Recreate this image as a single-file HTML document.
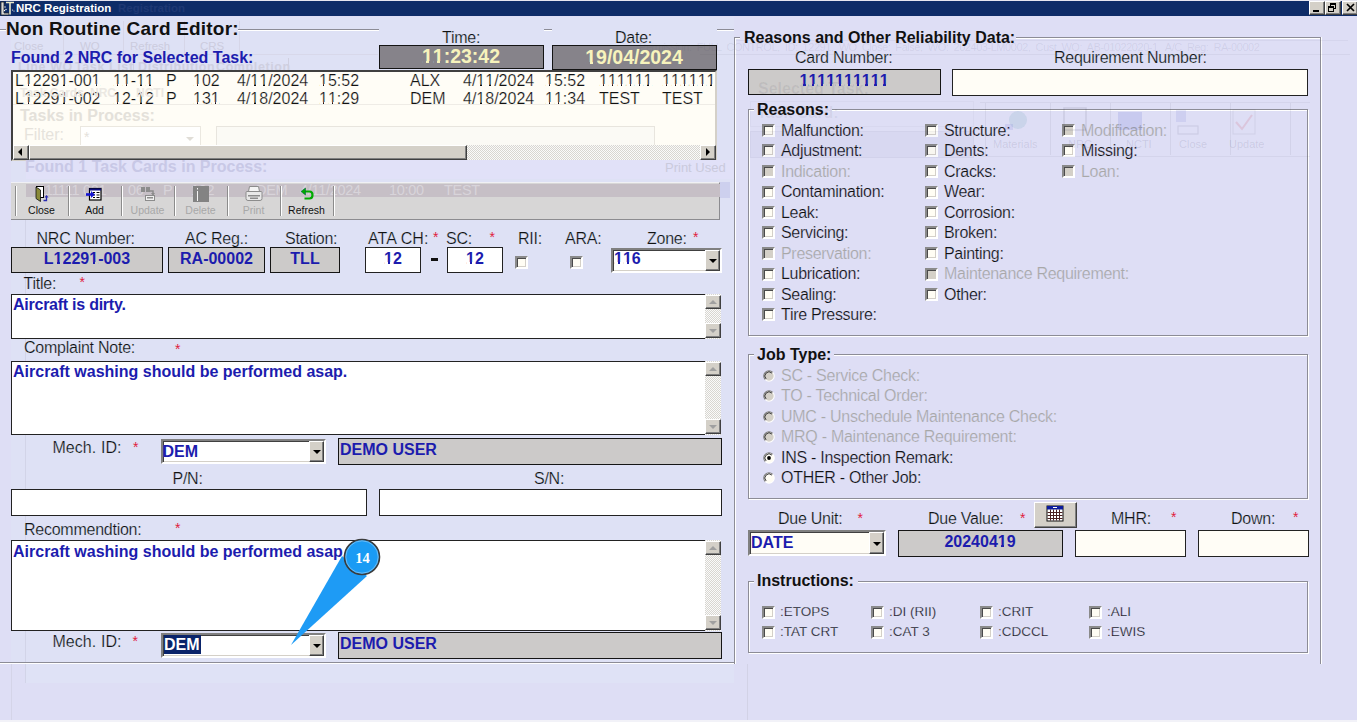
<!DOCTYPE html>
<html><head><meta charset="utf-8"><style>
html,body{margin:0;padding:0;width:1357px;height:722px;overflow:hidden;background:#dedef5}
body{position:relative;font-family:"Liberation Sans", sans-serif}
body>div{position:absolute;box-sizing:content-box}
.t{white-space:nowrap}
.o,.r{position:relative}
.o::before,.o::after,.r::before,.r::after{content:'';position:absolute;background:var(--b);bottom:0.185em;height:0.135em}
.o::before{left:0.04em;width:0.19em}
.o::after{left:0.378em;width:0.18em}
.r::before{left:0.05em;width:0.198em}
.r::after{left:0.343em;width:0.2em;height:0.11em}

</style></head><body>
<div style="left:0px;top:0px;width:1357px;height:722px;background:#dedef5"></div>
<div style="left:11px;top:17px;width:723px;height:646px;background:#dee1f5"></div>
<div style="left:25px;top:200px;width:1px;height:483px;background:#d2d4e8"></div>
<div style="left:0px;top:0px;width:1357px;height:1px;background:#e6e6f0"></div>
<div style="left:0px;top:1px;width:1357px;height:15px;background:#0e2c68"></div>
<div class="t" style="left:16px;top:1.02px;font-size:11.5px;line-height:14px;font-weight:bold;color:#fff;">NRC Registration</div>
<svg style="position:absolute;left:0;top:0" width="16" height="17"><rect x="0" y="1" width="15" height="15" fill="#0e2c68"/><path d="M1,2 h3 v11 h5 v2 h-8z" fill="#d8d8d8" stroke="#222" stroke-width="0.8"/><path d="M6,2.5 h8 M10,2.5 v12" stroke="#e8e8c8" stroke-width="1.6"/><circle cx="5" cy="7" r="0.7" fill="#fff"/><circle cx="6" cy="9.5" r="0.7" fill="#fff"/><circle cx="4.5" cy="10.5" r="0.7" fill="#fff"/><circle cx="12.5" cy="10" r="0.6" fill="#fff"/><circle cx="14" cy="11" r="0.6" fill="#fff"/></svg>
<div style="left:1309px;top:1px;width:14px;height:12px;background:#d4d0c8;border:1px solid;border-color:#fff #404040 #404040 #fff;box-shadow:inset -1px -1px 0 #808080"></div>
<div style="left:1325px;top:1px;width:14px;height:12px;background:#d4d0c8;border:1px solid;border-color:#fff #404040 #404040 #fff;box-shadow:inset -1px -1px 0 #808080"></div>
<div style="left:1342px;top:1px;width:14px;height:12px;background:#d4d0c8;border:1px solid;border-color:#fff #404040 #404040 #fff;box-shadow:inset -1px -1px 0 #808080"></div>
<svg style="position:absolute;left:0;top:0" width="1357" height="16"><rect x="1313" y="10" width="6" height="2" fill="#000"/><rect x="1330.5" y="3.5" width="5" height="5" fill="none" stroke="#000"/><rect x="1330" y="3" width="6" height="2" fill="#000"/><rect x="1328.5" y="6.5" width="5" height="5" fill="#d4d0c8" stroke="#000"/><rect x="1328" y="6" width="6" height="2" fill="#000"/><path d="M1347,4 l7,7 M1354,4 l-7,7" stroke="#000" stroke-width="1.7"/></svg>
<div class="t" style="left:118px;top:1.02px;font-size:11.5px;line-height:14px;font-weight:bold;color:#1e3874;">Registration</div>
<div style="left:63px;top:21px;width:1px;height:34px;background:#d6d6e8"></div>
<div style="left:123px;top:21px;width:1px;height:34px;background:#d6d6e8"></div>
<div style="left:184px;top:21px;width:1px;height:34px;background:#d6d6e8"></div>
<div style="left:239px;top:21px;width:1px;height:34px;background:#d6d6e8"></div>
<div class="t" style="left:14px;top:39.02px;font-size:11.5px;line-height:14px;font-weight:normal;color:#ccccde;">Close</div>
<div class="t" style="left:80px;top:39.02px;font-size:11.5px;line-height:14px;font-weight:normal;color:#ccccde;">WO</div>
<div class="t" style="left:130px;top:39.02px;font-size:11.5px;line-height:14px;font-weight:normal;color:#ccccde;">Refresh</div>
<div class="t" style="left:200px;top:39.02px;font-size:11.5px;line-height:14px;font-weight:normal;color:#ccccde;">CRS</div>
<div style="left:12px;top:54px;width:366px;height:1px;background:#d8d8ea"></div>
<div class="t" style="left:18px;top:59.67px;font-size:12.5px;line-height:15px;font-weight:bold;color:#cfcfe0;letter-spacing:0.6px">Line WO</div>
<div class="t" style="left:75px;top:59.67px;font-size:12.5px;line-height:15px;font-weight:bold;color:#cfcfe0;letter-spacing:0.6px">Task List</div>
<div class="t" style="left:138px;top:59.67px;font-size:12.5px;line-height:15px;font-weight:bold;color:#cfcfe0;letter-spacing:0.6px">Distribution</div>
<div class="t" style="left:216px;top:59.67px;font-size:12.5px;line-height:15px;font-weight:bold;color:#cfcfe0;letter-spacing:0.6px">Completion</div>
<div style="left:70px;top:58px;width:1px;height:16px;background:#cfcfe0"></div>
<div style="left:133px;top:58px;width:1px;height:16px;background:#cfcfe0"></div>
<div style="left:288px;top:58px;width:1px;height:16px;background:#cfcfe0"></div>
<div style="left:0px;top:29px;width:6px;height:1px;background:#8c8c96"></div>
<div style="left:0px;top:30px;width:6px;height:1px;background:#fff"></div>
<div style="left:238px;top:29px;width:141px;height:1px;background:#8c8c96"></div>
<div style="left:238px;top:30px;width:141px;height:1px;background:#fff"></div>
<div style="left:544px;top:29px;width:8px;height:1px;background:#8c8c96"></div>
<div style="left:544px;top:30px;width:8px;height:1px;background:#fff"></div>
<div style="left:717px;top:29px;width:17px;height:1px;background:#8c8c96"></div>
<div style="left:717px;top:30px;width:17px;height:1px;background:#fff"></div>
<div style="left:0px;top:662px;width:734px;height:1px;background:#8c8c96"></div>
<div style="left:0px;top:663px;width:734px;height:1px;background:#fff"></div>
<div class="t" style="left:6px;top:17.12px;font-size:19px;line-height:23px;font-weight:bold;color:#111;letter-spacing:0.2px">Non Routine Card Editor:</div>
<div class="t" style="left:442px;top:27.96px;font-size:16px;line-height:19px;font-weight:normal;color:#111;letter-spacing:-0.25px;-webkit-text-stroke:0.22px #dee0f5">Time:</div>
<div class="t" style="left:615px;top:27.96px;font-size:16px;line-height:19px;font-weight:normal;color:#111;letter-spacing:-0.25px;-webkit-text-stroke:0.22px #dee0f5">Date:</div>
<div style="left:379px;top:45px;width:163px;height:22px;background:#86838a;border:1px solid #141414"></div>
<div class="t" style="left:261.0px;top:44.74px;width:400px;text-align:center;font-size:19.5px;line-height:23px;font-weight:bold;color:#f7f3bc;"><span class="o" style="--b:#86838a">1</span><span class="o" style="--b:#86838a">1</span>:23:42</div>
<div style="left:552px;top:45px;width:163px;height:23px;background:#86838a;border:1px solid #141414"></div>
<div class="t" style="left:434.0px;top:45.74px;width:400px;text-align:center;font-size:19.5px;line-height:23px;font-weight:bold;color:#f7f3bc;"><span class="o" style="--b:#86838a">1</span>9/04/2024</div>
<div class="t" style="left:11px;top:47.96px;font-size:16px;line-height:19px;font-weight:bold;color:#1c1cae;">Found 2 NRC for Selected Task:</div>
<div style="left:11px;top:70px;width:702px;height:87px;background:#fffdf6;border:2px solid;border-color:#404040 #d4d0c8 #d4d0c8 #404040"></div>
<div class="t" style="left:15px;top:70.96px;font-size:16px;line-height:19px;font-weight:normal;color:#111;-webkit-text-stroke:0.22px #fffdf6">L<span class="r" style="--b:#fffdf6">1</span>229<span class="r" style="--b:#fffdf6">1</span>-00<span class="r" style="--b:#fffdf6">1</span></div>
<div class="t" style="left:113px;top:70.96px;font-size:16px;line-height:19px;font-weight:normal;color:#111;-webkit-text-stroke:0.22px #fffdf6"><span class="r" style="--b:#fffdf6">1</span><span class="r" style="--b:#fffdf6">1</span>-<span class="r" style="--b:#fffdf6">1</span><span class="r" style="--b:#fffdf6">1</span></div>
<div class="t" style="left:166px;top:70.96px;font-size:16px;line-height:19px;font-weight:normal;color:#111;-webkit-text-stroke:0.22px #fffdf6">P</div>
<div class="t" style="left:193px;top:70.96px;font-size:16px;line-height:19px;font-weight:normal;color:#111;-webkit-text-stroke:0.22px #fffdf6"><span class="r" style="--b:#fffdf6">1</span>02</div>
<div class="t" style="left:237px;top:70.96px;font-size:16px;line-height:19px;font-weight:normal;color:#111;-webkit-text-stroke:0.22px #fffdf6">4/<span class="r" style="--b:#fffdf6">1</span><span class="r" style="--b:#fffdf6">1</span>/2024</div>
<div class="t" style="left:319px;top:70.96px;font-size:16px;line-height:19px;font-weight:normal;color:#111;-webkit-text-stroke:0.22px #fffdf6"><span class="r" style="--b:#fffdf6">1</span>5:52</div>
<div class="t" style="left:410px;top:70.96px;font-size:16px;line-height:19px;font-weight:normal;color:#111;-webkit-text-stroke:0.22px #fffdf6">ALX</div>
<div class="t" style="left:463px;top:70.96px;font-size:16px;line-height:19px;font-weight:normal;color:#111;-webkit-text-stroke:0.22px #fffdf6">4/<span class="r" style="--b:#fffdf6">1</span><span class="r" style="--b:#fffdf6">1</span>/2024</div>
<div class="t" style="left:545px;top:70.96px;font-size:16px;line-height:19px;font-weight:normal;color:#111;-webkit-text-stroke:0.22px #fffdf6"><span class="r" style="--b:#fffdf6">1</span>5:52</div>
<div class="t" style="left:599px;top:70.96px;font-size:16px;line-height:19px;font-weight:normal;color:#111;-webkit-text-stroke:0.22px #fffdf6"><span class="r" style="--b:#fffdf6">1</span><span class="r" style="--b:#fffdf6">1</span><span class="r" style="--b:#fffdf6">1</span><span class="r" style="--b:#fffdf6">1</span><span class="r" style="--b:#fffdf6">1</span><span class="r" style="--b:#fffdf6">1</span></div>
<div class="t" style="left:662px;top:70.96px;font-size:16px;line-height:19px;font-weight:normal;color:#111;-webkit-text-stroke:0.22px #fffdf6"><span class="r" style="--b:#fffdf6">1</span><span class="r" style="--b:#fffdf6">1</span><span class="r" style="--b:#fffdf6">1</span><span class="r" style="--b:#fffdf6">1</span><span class="r" style="--b:#fffdf6">1</span><span class="r" style="--b:#fffdf6">1</span></div>
<div class="t" style="left:15px;top:88.96px;font-size:16px;line-height:19px;font-weight:normal;color:#111;-webkit-text-stroke:0.22px #fffdf6">L<span class="r" style="--b:#fffdf6">1</span>229<span class="r" style="--b:#fffdf6">1</span>-002</div>
<div class="t" style="left:113px;top:88.96px;font-size:16px;line-height:19px;font-weight:normal;color:#111;-webkit-text-stroke:0.22px #fffdf6"><span class="r" style="--b:#fffdf6">1</span>2-<span class="r" style="--b:#fffdf6">1</span>2</div>
<div class="t" style="left:166px;top:88.96px;font-size:16px;line-height:19px;font-weight:normal;color:#111;-webkit-text-stroke:0.22px #fffdf6">P</div>
<div class="t" style="left:193px;top:88.96px;font-size:16px;line-height:19px;font-weight:normal;color:#111;-webkit-text-stroke:0.22px #fffdf6"><span class="r" style="--b:#fffdf6">1</span>3<span class="r" style="--b:#fffdf6">1</span></div>
<div class="t" style="left:237px;top:88.96px;font-size:16px;line-height:19px;font-weight:normal;color:#111;-webkit-text-stroke:0.22px #fffdf6">4/<span class="r" style="--b:#fffdf6">1</span>8/2024</div>
<div class="t" style="left:319px;top:88.96px;font-size:16px;line-height:19px;font-weight:normal;color:#111;-webkit-text-stroke:0.22px #fffdf6"><span class="r" style="--b:#fffdf6">1</span><span class="r" style="--b:#fffdf6">1</span>:29</div>
<div class="t" style="left:410px;top:88.96px;font-size:16px;line-height:19px;font-weight:normal;color:#111;-webkit-text-stroke:0.22px #fffdf6">DEM</div>
<div class="t" style="left:463px;top:88.96px;font-size:16px;line-height:19px;font-weight:normal;color:#111;-webkit-text-stroke:0.22px #fffdf6">4/<span class="r" style="--b:#fffdf6">1</span>8/2024</div>
<div class="t" style="left:545px;top:88.96px;font-size:16px;line-height:19px;font-weight:normal;color:#111;-webkit-text-stroke:0.22px #fffdf6"><span class="r" style="--b:#fffdf6">1</span><span class="r" style="--b:#fffdf6">1</span>:34</div>
<div class="t" style="left:599px;top:88.96px;font-size:16px;line-height:19px;font-weight:normal;color:#111;-webkit-text-stroke:0.22px #fffdf6">TEST</div>
<div class="t" style="left:662px;top:88.96px;font-size:16px;line-height:19px;font-weight:normal;color:#111;-webkit-text-stroke:0.22px #fffdf6">TEST</div>
<div class="t" style="left:20px;top:85.84px;font-size:12px;line-height:14px;font-weight:bold;color:#ebe8e2;">Task Cards</div>
<div class="t" style="left:90px;top:85.84px;font-size:12px;line-height:14px;font-weight:bold;color:#ebe8e2;">NRC</div>
<div class="t" style="left:136px;top:85.84px;font-size:12px;line-height:14px;font-weight:bold;color:#ebe8e2;">NCTI</div>
<div style="left:13px;top:104px;width:702px;height:1px;background:#efece6"></div>
<div class="t" style="left:20px;top:105.96px;font-size:16px;line-height:19px;font-weight:bold;color:#e4e1da;">Tasks in Process:</div>
<div class="t" style="left:24px;top:124.96px;font-size:16px;line-height:19px;font-weight:normal;color:#e6e3dc;">Filter:</div>
<div style="left:80px;top:126px;width:119px;height:23px;border:1px solid #ebe8e0;background:#fffffe"></div>
<div class="t" style="left:84px;top:128.65px;font-size:14px;line-height:17px;font-weight:normal;color:#e4e1da;">*</div>
<div style="left:186px;top:137px;width:0;height:0;border-left:4px solid transparent;border-right:4px solid transparent;border-top:4px solid #e0ddd6"></div>
<div style="left:216px;top:126px;width:437px;height:25px;border:1px solid #e8e5de;background:#fbfaf5"></div>
<div style="left:13px;top:145px;width:702px;height:15px;background:repeating-conic-gradient(#fafafa 0 25%, #d8d6d0 0 50%) 0 0/2px 2px"></div>
<div style="left:13px;top:145px;width:14px;height:13px;background:#d4d0c8;border:1px solid;border-color:#fff #404040 #404040 #fff;box-shadow:inset -1px -1px 0 #808080"></div>
<div style="left:18px;top:148px;width:0;height:0;border-top:4px solid transparent;border-bottom:4px solid transparent;border-right:4px solid #000"></div>
<div style="left:29px;top:145px;width:436px;height:13px;background:#d4d0c8;border:1px solid;border-color:#fff #404040 #404040 #fff;box-shadow:inset -1px -1px 0 #808080"></div>
<div style="left:700px;top:145px;width:14px;height:13px;background:#d4d0c8;border:1px solid;border-color:#fff #404040 #404040 #fff;box-shadow:inset -1px -1px 0 #808080"></div>
<div style="left:706px;top:148px;width:0;height:0;border-top:4px solid transparent;border-bottom:4px solid transparent;border-left:4px solid #000"></div>
<div style="left:26px;top:160px;width:709px;height:19px;background:#e1e1f8"></div>
<div class="t" style="left:25px;top:156.96px;font-size:16px;line-height:19px;font-weight:bold;color:#c8c8e6;">Found 1 Task Cards in Process:</div>
<div class="t" style="left:665px;top:159.50px;font-size:13px;line-height:16px;font-weight:normal;color:#cacadc;">Print Used</div>
<div style="left:11px;top:182px;width:708px;height:36px;background:#d7d6d6;border-top:1px solid #f0f0f4;border-right:1px solid #8c8c90;border-bottom:1px solid #8c8c90"></div>
<div style="left:26px;top:184px;width:694px;height:13px;background:#c6bfc6"></div>
<div style="left:720px;top:182px;width:10px;height:16px;background:#cdd0ee"></div>
<div class="t" style="left:38px;top:182.48px;font-size:14.5px;line-height:17px;font-weight:normal;color:#d8d4da;letter-spacing:-0.3px">111111 001</div>
<div class="t" style="left:128px;top:182.48px;font-size:14.5px;line-height:17px;font-weight:normal;color:#d8d4da;letter-spacing:-0.3px">06</div>
<div class="t" style="left:163px;top:182.48px;font-size:14.5px;line-height:17px;font-weight:normal;color:#d8d4da;letter-spacing:-0.3px">P</div>
<div class="t" style="left:191px;top:182.48px;font-size:14.5px;line-height:17px;font-weight:normal;color:#d8d4da;letter-spacing:-0.3px">102</div>
<div class="t" style="left:256px;top:182.48px;font-size:14.5px;line-height:17px;font-weight:normal;color:#d8d4da;letter-spacing:-0.3px">DEM</div>
<div class="t" style="left:300px;top:182.48px;font-size:14.5px;line-height:17px;font-weight:normal;color:#d8d4da;letter-spacing:-0.3px">4/11/2024</div>
<div class="t" style="left:389px;top:182.48px;font-size:14.5px;line-height:17px;font-weight:normal;color:#d8d4da;letter-spacing:-0.3px">10:00</div>
<div class="t" style="left:444px;top:182.48px;font-size:14.5px;line-height:17px;font-weight:normal;color:#d8d4da;letter-spacing:-0.3px">TEST</div>
<div style="left:15px;top:186px;width:1px;height:30px;background:#8c8c8c"></div>
<div style="left:16px;top:186px;width:1px;height:30px;background:#fff"></div>
<div style="left:68px;top:186px;width:1px;height:30px;background:#8c8c8c"></div>
<div style="left:69px;top:186px;width:1px;height:30px;background:#fff"></div>
<div style="left:121px;top:186px;width:1px;height:30px;background:#8c8c8c"></div>
<div style="left:122px;top:186px;width:1px;height:30px;background:#fff"></div>
<div style="left:174px;top:186px;width:1px;height:30px;background:#8c8c8c"></div>
<div style="left:175px;top:186px;width:1px;height:30px;background:#fff"></div>
<div style="left:227px;top:186px;width:1px;height:30px;background:#8c8c8c"></div>
<div style="left:228px;top:186px;width:1px;height:30px;background:#fff"></div>
<div style="left:280px;top:186px;width:1px;height:30px;background:#8c8c8c"></div>
<div style="left:281px;top:186px;width:1px;height:30px;background:#fff"></div>
<div style="left:333px;top:186px;width:1px;height:30px;background:#8c8c8c"></div>
<div style="left:334px;top:186px;width:1px;height:30px;background:#fff"></div>
<div class="t" style="left:15.5px;top:204.36px;width:52px;text-align:center;font-size:10.5px;line-height:13px;font-weight:normal;color:#111;">Close</div>
<div class="t" style="left:68.5px;top:204.36px;width:52px;text-align:center;font-size:10.5px;line-height:13px;font-weight:normal;color:#111;">Add</div>
<div class="t" style="left:121.5px;top:204.36px;width:52px;text-align:center;font-size:10.5px;line-height:13px;font-weight:normal;color:#a8a8a8;">Update</div>
<div class="t" style="left:174.5px;top:204.36px;width:52px;text-align:center;font-size:10.5px;line-height:13px;font-weight:normal;color:#a8a8a8;">Delete</div>
<div class="t" style="left:227.5px;top:204.36px;width:52px;text-align:center;font-size:10.5px;line-height:13px;font-weight:normal;color:#a8a8a8;">Print</div>
<div class="t" style="left:280.5px;top:204.36px;width:52px;text-align:center;font-size:10.5px;line-height:13px;font-weight:normal;color:#111;">Refresh</div>
<svg style="position:absolute;left:0;top:0" width="340" height="222"><rect x="36.5" y="186.5" width="7" height="11" fill="#fff" stroke="#000"/><polygon points="36,187 40.5,190 40.5,201.5 36,198.5" fill="#8a8a3a" stroke="#111" stroke-width="0.8"/><path d="M43.5,200.5 h3 v-3.5" fill="none" stroke="#2a2ab0" stroke-width="1.3"/><polygon points="44.5,197.5 46.5,195 48.5,197.5" fill="#2a2ab0"/><rect x="89.5" y="188.5" width="11.5" height="11.5" fill="#fff" stroke="#000" stroke-width="1.2"/><rect x="89.5" y="188.5" width="11.5" height="2" fill="#101080"/><path d="M93,192.5 h2 M96.5,192.5 h3 M93,195 h2 M96.5,195 h3 M93,197.5 h2 M96.5,197.5 h3" stroke="#000" stroke-width="1"/><rect x="86" y="193.2" width="6" height="2.6" fill="#1515d0"/><polygon points="91,191 95,194.5 91,198" fill="#1515d0"/><rect x="141" y="187" width="4" height="5" fill="#8c8c8c"/><rect x="146" y="187" width="4" height="5" fill="#8c8c8c"/><path d="M150,191 h3 v3" stroke="#8c8c8c" stroke-width="1.5" fill="none"/><polygon points="151,193 155,193 153,196" fill="#8c8c8c"/><rect x="145.5" y="195.5" width="9" height="5" fill="#f0f0f0" stroke="#8c8c8c"/><rect x="147" y="197" width="6" height="1.5" fill="#8c8c8c"/><rect x="193" y="186" width="16" height="16" fill="#838383"/><rect x="197" y="191" width="1" height="10" fill="#f4f4f4"/><rect x="197" y="188" width="1" height="1.5" fill="#f4f4f4"/><path d="M249.5,186.5 h9 l1,5 h-11 z" fill="#f4f4f4" stroke="#8c8c8c"/><path d="M247,191.5 h14 q1,0 1,1 v6 q0,2 -2,2 h-12 q-2,0 -2,-2 v-6 q0,-1 1,-1z" fill="#e8e8e8" stroke="#8c8c8c"/><rect x="248" y="195" width="12" height="1.5" fill="#8c8c8c"/><rect x="250" y="197.5" width="8" height="1.5" fill="#8c8c8c"/><path d="M303.5,191.5 h6 q3,0 3,3.5 q0,3.5 -3,3.5 h-5" fill="none" stroke="#0a0" stroke-width="2.2"/><polygon points="301,191.5 305.5,188 305.5,195" fill="#0a0" stroke="#064" stroke-width="0.6"/></svg>
<div class="t" style="left:36.5px;top:229.46px;font-size:16px;line-height:19px;font-weight:normal;color:#111;letter-spacing:-0.2px;-webkit-text-stroke:0.22px #dee0f5">NRC Number:</div>
<div class="t" style="left:185px;top:228.96px;font-size:16px;line-height:19px;font-weight:normal;color:#111;letter-spacing:-0.25px;-webkit-text-stroke:0.22px #dee0f5">AC Reg.:</div>
<div class="t" style="left:285px;top:228.96px;font-size:16px;line-height:19px;font-weight:normal;color:#111;letter-spacing:-0.25px;-webkit-text-stroke:0.22px #dee0f5">Station:</div>
<div class="t" style="left:368px;top:228.96px;font-size:16px;line-height:19px;font-weight:normal;color:#111;letter-spacing:0.1px;-webkit-text-stroke:0.22px #dee0f5">ATA CH:</div>
<div class="t" style="left:446px;top:228.96px;font-size:16px;line-height:19px;font-weight:normal;color:#111;letter-spacing:-0.25px;-webkit-text-stroke:0.22px #dee0f5">SC:</div>
<div class="t" style="left:518px;top:228.96px;font-size:16px;line-height:19px;font-weight:normal;color:#111;letter-spacing:-0.25px;-webkit-text-stroke:0.22px #dee0f5">RII:</div>
<div class="t" style="left:565px;top:228.96px;font-size:16px;line-height:19px;font-weight:normal;color:#111;letter-spacing:-0.25px;-webkit-text-stroke:0.22px #dee0f5">ARA:</div>
<div class="t" style="left:647px;top:228.96px;font-size:16px;line-height:19px;font-weight:normal;color:#111;letter-spacing:-0.25px;-webkit-text-stroke:0.22px #dee0f5">Zone:</div>
<div class="t" style="left:433px;top:228.85px;font-size:14px;line-height:17px;font-weight:normal;color:#e0203c;">*</div>
<div class="t" style="left:489.5px;top:228.85px;font-size:14px;line-height:17px;font-weight:normal;color:#e0203c;">*</div>
<div class="t" style="left:693px;top:229.35px;font-size:14px;line-height:17px;font-weight:normal;color:#e0203c;">*</div>
<div style="left:11px;top:247px;width:150px;height:24px;background:#cccac9;border:1px solid #151515"></div>
<div class="t" style="left:-113.0px;top:248.96px;width:400px;text-align:center;font-size:16px;line-height:19px;font-weight:bold;color:#1c1cae;">L<span class="o" style="--b:#cccac9">1</span>229<span class="o" style="--b:#cccac9">1</span>-003</div>
<div style="left:168px;top:247px;width:95px;height:24px;background:#cccac9;border:1px solid #151515"></div>
<div class="t" style="left:16.5px;top:248.96px;width:400px;text-align:center;font-size:16px;line-height:19px;font-weight:bold;color:#1c1cae;">RA-00002</div>
<div style="left:270px;top:247px;width:68px;height:24px;background:#cccac9;border:1px solid #151515"></div>
<div class="t" style="left:105.0px;top:248.96px;width:400px;text-align:center;font-size:16px;line-height:19px;font-weight:bold;color:#1c1cae;">TLL</div>
<div style="left:365px;top:247px;width:54px;height:24px;background:#fff;border:1px solid #222"></div>
<div class="t" style="left:193.0px;top:248.96px;width:400px;text-align:center;font-size:16px;line-height:19px;font-weight:bold;color:#1c1cae;"><span class="o" style="--b:#fff">1</span>2</div>
<div style="left:431px;top:258px;width:7px;height:3px;background:#111"></div>
<div style="left:447px;top:247px;width:54px;height:24px;background:#fff;border:1px solid #222"></div>
<div class="t" style="left:275.0px;top:248.96px;width:400px;text-align:center;font-size:16px;line-height:19px;font-weight:bold;color:#1c1cae;"><span class="o" style="--b:#fff">1</span>2</div>
<div style="left:515px;top:256px;width:9px;height:9px;background:#fffdf4;border:2px solid;border-color:#8a8a8a #fff #fff #8a8a8a;box-shadow:inset 1px 1px 0 #4a4a4a, inset -1px -1px 0 #d4d0c8"></div>
<div style="left:570px;top:256px;width:9px;height:9px;background:#fffdf4;border:2px solid;border-color:#8a8a8a #fff #fff #8a8a8a;box-shadow:inset 1px 1px 0 #4a4a4a, inset -1px -1px 0 #d4d0c8"></div>
<div style="left:611px;top:248px;width:107px;height:21px;background:#fff;border:2px solid;border-color:#808080 #fff #fff #808080;box-shadow:inset 1px 1px 0 #404040, inset -1px -1px 0 #d4d0c8"></div>
<div style="left:705px;top:250px;width:13px;height:19px;background:#d4d0c8;border:1px solid;border-color:#fff #404040 #404040 #fff;box-shadow:inset -1px -1px 0 #808080"></div>
<div style="left:709px;top:259px;width:0;height:0;border-left:4px solid transparent;border-right:4px solid transparent;border-top:4px solid #000"></div>
<div class="t" style="left:614px;top:248.96px;font-size:16px;line-height:19px;font-weight:bold;color:#1c1cae;"><span class="o" style="--b:#fff">1</span><span class="o" style="--b:#fff">1</span>6</div>
<div class="t" style="left:23.5px;top:273.96px;font-size:16px;line-height:19px;font-weight:normal;color:#111;letter-spacing:-0.25px;-webkit-text-stroke:0.22px #dee0f5">Title:</div>
<div class="t" style="left:79.5px;top:273.85px;font-size:14px;line-height:17px;font-weight:normal;color:#e0203c;">*</div>
<div style="left:11px;top:294px;width:693px;height:43px;background:#fff;border:1px solid #222"></div>
<div style="left:705px;top:294px;width:16px;height:45px;background:repeating-conic-gradient(#fafafa 0 25%, #d8d6d0 0 50%) 0 0/2px 2px"></div>
<div style="left:705px;top:295px;width:14px;height:12px;background:#d4d0c8;border:1px solid;border-color:#fff #404040 #404040 #fff;box-shadow:inset -1px -1px 0 #808080"></div>
<div style="left:705px;top:323px;width:14px;height:13px;background:#d4d0c8;border:1px solid;border-color:#fff #404040 #404040 #fff;box-shadow:inset -1px -1px 0 #808080"></div>
<div style="left:709px;top:300px;width:0;height:0;border-left:4px solid transparent;border-right:4px solid transparent;border-bottom:4px solid #a0a0a0"></div>
<div style="left:709px;top:329px;width:0;height:0;border-left:4px solid transparent;border-right:4px solid transparent;border-top:4px solid #a0a0a0"></div>
<div class="t" style="left:13px;top:295.46px;font-size:16px;line-height:19px;font-weight:bold;color:#1c1cae;"><span style="letter-spacing:-0.25px">Aircraft is dirty.</span></div>
<div class="t" style="left:24px;top:338.46px;font-size:16px;line-height:19px;font-weight:normal;color:#111;letter-spacing:-0.25px;-webkit-text-stroke:0.22px #dee0f5">Complaint Note:</div>
<div class="t" style="left:175.0px;top:340.85px;font-size:14px;line-height:17px;font-weight:normal;color:#e0203c;">*</div>
<div style="left:11px;top:361px;width:693px;height:72px;background:#fff;border:1px solid #222"></div>
<div style="left:705px;top:361px;width:16px;height:74px;background:repeating-conic-gradient(#fafafa 0 25%, #d8d6d0 0 50%) 0 0/2px 2px"></div>
<div style="left:705px;top:362px;width:14px;height:12px;background:#d4d0c8;border:1px solid;border-color:#fff #404040 #404040 #fff;box-shadow:inset -1px -1px 0 #808080"></div>
<div style="left:705px;top:419px;width:14px;height:13px;background:#d4d0c8;border:1px solid;border-color:#fff #404040 #404040 #fff;box-shadow:inset -1px -1px 0 #808080"></div>
<div style="left:709px;top:367px;width:0;height:0;border-left:4px solid transparent;border-right:4px solid transparent;border-bottom:4px solid #a0a0a0"></div>
<div style="left:709px;top:425px;width:0;height:0;border-left:4px solid transparent;border-right:4px solid transparent;border-top:4px solid #a0a0a0"></div>
<div class="t" style="left:13px;top:361.96px;font-size:16px;line-height:19px;font-weight:bold;color:#1c1cae;">Aircraft washing should be performed asap.</div>
<div class="t" style="left:52.5px;top:438.26px;font-size:16px;line-height:19px;font-weight:normal;color:#111;letter-spacing:0px;word-spacing:0.5px;-webkit-text-stroke:0.22px #dee0f5">Mech. ID:</div>
<div class="t" style="left:133.0px;top:438.85px;font-size:14px;line-height:17px;font-weight:normal;color:#e0203c;">*</div>
<div style="left:161px;top:439px;width:161px;height:21px;background:#fff;border:2px solid;border-color:#808080 #fff #fff #808080;box-shadow:inset 1px 1px 0 #404040, inset -1px -1px 0 #d4d0c8"></div>
<div style="left:309px;top:441px;width:13px;height:19px;background:#d4d0c8;border:1px solid;border-color:#fff #404040 #404040 #fff;box-shadow:inset -1px -1px 0 #808080"></div>
<div style="left:313px;top:450px;width:0;height:0;border-left:4px solid transparent;border-right:4px solid transparent;border-top:4px solid #000"></div>
<div class="t" style="left:162.5px;top:441.96px;font-size:16px;line-height:19px;font-weight:bold;color:#1c1cae;">DEM</div>
<div style="left:338px;top:438px;width:382px;height:25px;background:#cccac9;border:1px solid #151515"></div>
<div class="t" style="left:340px;top:439.96px;font-size:16px;line-height:19px;font-weight:bold;color:#1c1cae;">DEMO USER</div>
<div class="t" style="left:172.5px;top:469.46px;font-size:16px;line-height:19px;font-weight:normal;color:#111;letter-spacing:-0.25px;-webkit-text-stroke:0.22px #dee0f5">P/N:</div>
<div class="t" style="left:534px;top:469.46px;font-size:16px;line-height:19px;font-weight:normal;color:#111;letter-spacing:-0.25px;-webkit-text-stroke:0.22px #dee0f5">S/N:</div>
<div style="left:11px;top:489px;width:354px;height:25px;background:#fff;border:1px solid #222"></div>
<div style="left:379px;top:489px;width:341px;height:25px;background:#fff;border:1px solid #222"></div>
<div class="t" style="left:24px;top:519.96px;font-size:16px;line-height:19px;font-weight:normal;color:#111;letter-spacing:-0.25px;-webkit-text-stroke:0.22px #dee0f5">Recommendtion:</div>
<div class="t" style="left:175.0px;top:520.35px;font-size:14px;line-height:17px;font-weight:normal;color:#e0203c;">*</div>
<div style="left:11px;top:540px;width:693px;height:89px;background:#fff;border:1px solid #222"></div>
<div style="left:705px;top:540px;width:16px;height:91px;background:repeating-conic-gradient(#fafafa 0 25%, #d8d6d0 0 50%) 0 0/2px 2px"></div>
<div style="left:705px;top:541px;width:14px;height:12px;background:#d4d0c8;border:1px solid;border-color:#fff #404040 #404040 #fff;box-shadow:inset -1px -1px 0 #808080"></div>
<div style="left:705px;top:615px;width:14px;height:13px;background:#d4d0c8;border:1px solid;border-color:#fff #404040 #404040 #fff;box-shadow:inset -1px -1px 0 #808080"></div>
<div style="left:709px;top:546px;width:0;height:0;border-left:4px solid transparent;border-right:4px solid transparent;border-bottom:4px solid #a0a0a0"></div>
<div style="left:709px;top:621px;width:0;height:0;border-left:4px solid transparent;border-right:4px solid transparent;border-top:4px solid #a0a0a0"></div>
<div class="t" style="left:13px;top:541.96px;font-size:16px;line-height:19px;font-weight:bold;color:#1c1cae;">Aircraft washing should be performed asap.</div>
<div class="t" style="left:52.5px;top:632.26px;font-size:16px;line-height:19px;font-weight:normal;color:#111;letter-spacing:0px;word-spacing:0.5px;-webkit-text-stroke:0.22px #dee0f5">Mech. ID:</div>
<div class="t" style="left:132.5px;top:632.85px;font-size:14px;line-height:17px;font-weight:normal;color:#e0203c;">*</div>
<div style="left:161px;top:633px;width:161px;height:21px;background:#fff;border:2px solid;border-color:#808080 #fff #fff #808080;box-shadow:inset 1px 1px 0 #404040, inset -1px -1px 0 #d4d0c8"></div>
<div style="left:309px;top:635px;width:13px;height:19px;background:#d4d0c8;border:1px solid;border-color:#fff #404040 #404040 #fff;box-shadow:inset -1px -1px 0 #808080"></div>
<div style="left:313px;top:644px;width:0;height:0;border-left:4px solid transparent;border-right:4px solid transparent;border-top:4px solid #000"></div>
<div style="left:164px;top:635px;width:37px;height:19px;background:#0a246a"></div>
<div class="t" style="left:164px;top:634.96px;font-size:16px;line-height:19px;font-weight:bold;color:#fff;">DEM</div>
<div style="left:338px;top:632px;width:382px;height:25px;background:#cccac9;border:1px solid #151515"></div>
<div class="t" style="left:340px;top:633.96px;font-size:16px;line-height:19px;font-weight:bold;color:#1c1cae;">DEMO USER</div>
<div style="left:734px;top:37px;width:585px;height:626px;border:1px solid #8c8c96;border-bottom:none;box-shadow:inset 1px 1px 0 #fff, 1px 0 0 #fff"></div>
<div style="left:747px;top:664px;width:1px;height:56px;background:#d2d2e6"></div>
<div style="left:26px;top:664px;width:708px;height:19px;background:#dfe2f6"></div>
<div style="left:11px;top:664px;width:1px;height:56px;background:#d4d4e8"></div>
<div style="left:0px;top:720px;width:1357px;height:2px;background:#f2f2f8"></div>
<div style="left:740px;top:30px;width:276px;height:14px;background:#dedef5"></div>
<div class="t" style="left:744px;top:27.96px;font-size:16px;line-height:19px;font-weight:bold;color:#111;">Reasons and Other Reliability Data:</div>
<div class="t" style="left:795px;top:47.96px;font-size:16px;line-height:19px;font-weight:normal;color:#111;letter-spacing:-0.25px;-webkit-text-stroke:0.22px #dee0f5">Card Number:</div>
<div class="t" style="left:1054px;top:47.96px;font-size:16px;line-height:19px;font-weight:normal;color:#111;letter-spacing:-0.25px;-webkit-text-stroke:0.22px #dee0f5">Requirement Number:</div>
<div style="left:748px;top:69px;width:191px;height:24px;background:#cccac9;border:1px solid #151515"></div>
<div class="t" style="left:644.0px;top:70.96px;width:400px;text-align:center;font-size:16px;line-height:19px;font-weight:bold;color:#1c1cae;"><span class="o" style="--b:#cccac9">1</span><span class="o" style="--b:#cccac9">1</span><span class="o" style="--b:#cccac9">1</span><span class="o" style="--b:#cccac9">1</span><span class="o" style="--b:#cccac9">1</span><span class="o" style="--b:#cccac9">1</span><span class="o" style="--b:#cccac9">1</span><span class="o" style="--b:#cccac9">1</span><span class="o" style="--b:#cccac9">1</span><span class="o" style="--b:#cccac9">1</span></div>
<div style="left:952px;top:69px;width:354px;height:25px;background:#fffdf6;border:1px solid #222"></div>
<div style="left:748px;top:109px;width:558px;height:225px;border:1px solid #8c8c96;box-shadow:inset 1px 1px 0 #fff, 1px 1px 0 #fff"></div>
<div style="left:754px;top:101px;width:78px;height:14px;background:#dedef5"></div>
<div class="t" style="left:757px;top:99.96px;font-size:16px;line-height:19px;font-weight:bold;color:#111;">Reasons:</div>
<div style="left:762px;top:124px;width:9px;height:9px;background:#fffdf4;border:2px solid;border-color:#8a8a8a #fff #fff #8a8a8a;box-shadow:inset 1px 1px 0 #4a4a4a, inset -1px -1px 0 #d4d0c8"></div>
<div class="t" style="left:781px;top:120.96px;font-size:16px;line-height:19px;font-weight:normal;color:#111;letter-spacing:-0.3px;-webkit-text-stroke:0.22px #dedef5">Malfunction:</div>
<div style="left:762px;top:144px;width:9px;height:9px;background:#fffdf4;border:2px solid;border-color:#8a8a8a #fff #fff #8a8a8a;box-shadow:inset 1px 1px 0 #4a4a4a, inset -1px -1px 0 #d4d0c8"></div>
<div class="t" style="left:781px;top:141.46px;font-size:16px;line-height:19px;font-weight:normal;color:#111;letter-spacing:-0.3px;-webkit-text-stroke:0.22px #dedef5">Adjustment:</div>
<div style="left:762px;top:165px;width:9px;height:9px;background:#d4d0c8;border:2px solid;border-color:#8a8a8a #fff #fff #8a8a8a;box-shadow:inset 1px 1px 0 #4a4a4a, inset -1px -1px 0 #d4d0c8"></div>
<div class="t" style="left:781px;top:161.96px;font-size:16px;line-height:19px;font-weight:normal;color:#a8a8a8;letter-spacing:-0.3px;-webkit-text-stroke:0.22px #dedef5">Indication:</div>
<div style="left:762px;top:186px;width:9px;height:9px;background:#fffdf4;border:2px solid;border-color:#8a8a8a #fff #fff #8a8a8a;box-shadow:inset 1px 1px 0 #4a4a4a, inset -1px -1px 0 #d4d0c8"></div>
<div class="t" style="left:781px;top:182.46px;font-size:16px;line-height:19px;font-weight:normal;color:#111;letter-spacing:-0.3px;-webkit-text-stroke:0.22px #dedef5">Contamination:</div>
<div style="left:762px;top:206px;width:9px;height:9px;background:#fffdf4;border:2px solid;border-color:#8a8a8a #fff #fff #8a8a8a;box-shadow:inset 1px 1px 0 #4a4a4a, inset -1px -1px 0 #d4d0c8"></div>
<div class="t" style="left:781px;top:202.96px;font-size:16px;line-height:19px;font-weight:normal;color:#111;letter-spacing:-0.3px;-webkit-text-stroke:0.22px #dedef5">Leak:</div>
<div style="left:762px;top:226px;width:9px;height:9px;background:#fffdf4;border:2px solid;border-color:#8a8a8a #fff #fff #8a8a8a;box-shadow:inset 1px 1px 0 #4a4a4a, inset -1px -1px 0 #d4d0c8"></div>
<div class="t" style="left:781px;top:223.46px;font-size:16px;line-height:19px;font-weight:normal;color:#111;letter-spacing:-0.3px;-webkit-text-stroke:0.22px #dedef5">Servicing:</div>
<div style="left:762px;top:247px;width:9px;height:9px;background:#d4d0c8;border:2px solid;border-color:#8a8a8a #fff #fff #8a8a8a;box-shadow:inset 1px 1px 0 #4a4a4a, inset -1px -1px 0 #d4d0c8"></div>
<div class="t" style="left:781px;top:243.96px;font-size:16px;line-height:19px;font-weight:normal;color:#a8a8a8;letter-spacing:-0.3px;-webkit-text-stroke:0.22px #dedef5">Preservation:</div>
<div style="left:762px;top:268px;width:9px;height:9px;background:#fffdf4;border:2px solid;border-color:#8a8a8a #fff #fff #8a8a8a;box-shadow:inset 1px 1px 0 #4a4a4a, inset -1px -1px 0 #d4d0c8"></div>
<div class="t" style="left:781px;top:264.46px;font-size:16px;line-height:19px;font-weight:normal;color:#111;letter-spacing:-0.3px;-webkit-text-stroke:0.22px #dedef5">Lubrication:</div>
<div style="left:762px;top:288px;width:9px;height:9px;background:#fffdf4;border:2px solid;border-color:#8a8a8a #fff #fff #8a8a8a;box-shadow:inset 1px 1px 0 #4a4a4a, inset -1px -1px 0 #d4d0c8"></div>
<div class="t" style="left:781px;top:284.96px;font-size:16px;line-height:19px;font-weight:normal;color:#111;letter-spacing:-0.3px;-webkit-text-stroke:0.22px #dedef5">Sealing:</div>
<div style="left:762px;top:308px;width:9px;height:9px;background:#fffdf4;border:2px solid;border-color:#8a8a8a #fff #fff #8a8a8a;box-shadow:inset 1px 1px 0 #4a4a4a, inset -1px -1px 0 #d4d0c8"></div>
<div class="t" style="left:781px;top:305.46px;font-size:16px;line-height:19px;font-weight:normal;color:#111;letter-spacing:-0.3px;-webkit-text-stroke:0.22px #dedef5">Tire Pressure:</div>
<div style="left:925px;top:124px;width:9px;height:9px;background:#fffdf4;border:2px solid;border-color:#8a8a8a #fff #fff #8a8a8a;box-shadow:inset 1px 1px 0 #4a4a4a, inset -1px -1px 0 #d4d0c8"></div>
<div class="t" style="left:944px;top:120.96px;font-size:16px;line-height:19px;font-weight:normal;color:#111;letter-spacing:-0.3px;-webkit-text-stroke:0.22px #dedef5">Structure:</div>
<div style="left:925px;top:144px;width:9px;height:9px;background:#fffdf4;border:2px solid;border-color:#8a8a8a #fff #fff #8a8a8a;box-shadow:inset 1px 1px 0 #4a4a4a, inset -1px -1px 0 #d4d0c8"></div>
<div class="t" style="left:944px;top:141.46px;font-size:16px;line-height:19px;font-weight:normal;color:#111;letter-spacing:-0.3px;-webkit-text-stroke:0.22px #dedef5">Dents:</div>
<div style="left:925px;top:165px;width:9px;height:9px;background:#fffdf4;border:2px solid;border-color:#8a8a8a #fff #fff #8a8a8a;box-shadow:inset 1px 1px 0 #4a4a4a, inset -1px -1px 0 #d4d0c8"></div>
<div class="t" style="left:944px;top:161.96px;font-size:16px;line-height:19px;font-weight:normal;color:#111;letter-spacing:-0.3px;-webkit-text-stroke:0.22px #dedef5">Cracks:</div>
<div style="left:925px;top:186px;width:9px;height:9px;background:#fffdf4;border:2px solid;border-color:#8a8a8a #fff #fff #8a8a8a;box-shadow:inset 1px 1px 0 #4a4a4a, inset -1px -1px 0 #d4d0c8"></div>
<div class="t" style="left:944px;top:182.46px;font-size:16px;line-height:19px;font-weight:normal;color:#111;letter-spacing:-0.3px;-webkit-text-stroke:0.22px #dedef5">Wear:</div>
<div style="left:925px;top:206px;width:9px;height:9px;background:#fffdf4;border:2px solid;border-color:#8a8a8a #fff #fff #8a8a8a;box-shadow:inset 1px 1px 0 #4a4a4a, inset -1px -1px 0 #d4d0c8"></div>
<div class="t" style="left:944px;top:202.96px;font-size:16px;line-height:19px;font-weight:normal;color:#111;letter-spacing:-0.3px;-webkit-text-stroke:0.22px #dedef5">Corrosion:</div>
<div style="left:925px;top:226px;width:9px;height:9px;background:#fffdf4;border:2px solid;border-color:#8a8a8a #fff #fff #8a8a8a;box-shadow:inset 1px 1px 0 #4a4a4a, inset -1px -1px 0 #d4d0c8"></div>
<div class="t" style="left:944px;top:223.46px;font-size:16px;line-height:19px;font-weight:normal;color:#111;letter-spacing:-0.3px;-webkit-text-stroke:0.22px #dedef5">Broken:</div>
<div style="left:925px;top:247px;width:9px;height:9px;background:#fffdf4;border:2px solid;border-color:#8a8a8a #fff #fff #8a8a8a;box-shadow:inset 1px 1px 0 #4a4a4a, inset -1px -1px 0 #d4d0c8"></div>
<div class="t" style="left:944px;top:243.96px;font-size:16px;line-height:19px;font-weight:normal;color:#111;letter-spacing:-0.3px;-webkit-text-stroke:0.22px #dedef5">Painting:</div>
<div style="left:925px;top:268px;width:9px;height:9px;background:#d4d0c8;border:2px solid;border-color:#8a8a8a #fff #fff #8a8a8a;box-shadow:inset 1px 1px 0 #4a4a4a, inset -1px -1px 0 #d4d0c8"></div>
<div class="t" style="left:944px;top:264.46px;font-size:16px;line-height:19px;font-weight:normal;color:#a8a8a8;letter-spacing:-0.3px;-webkit-text-stroke:0.22px #dedef5">Maintenance Requirement:</div>
<div style="left:925px;top:288px;width:9px;height:9px;background:#fffdf4;border:2px solid;border-color:#8a8a8a #fff #fff #8a8a8a;box-shadow:inset 1px 1px 0 #4a4a4a, inset -1px -1px 0 #d4d0c8"></div>
<div class="t" style="left:944px;top:284.96px;font-size:16px;line-height:19px;font-weight:normal;color:#111;letter-spacing:-0.3px;-webkit-text-stroke:0.22px #dedef5">Other:</div>
<div style="left:1062px;top:124px;width:9px;height:9px;background:#d4d0c8;border:2px solid;border-color:#8a8a8a #fff #fff #8a8a8a;box-shadow:inset 1px 1px 0 #4a4a4a, inset -1px -1px 0 #d4d0c8"></div>
<div class="t" style="left:1081px;top:120.96px;font-size:16px;line-height:19px;font-weight:normal;color:#a8a8a8;letter-spacing:-0.3px;-webkit-text-stroke:0.22px #dedef5">Modification:</div>
<div style="left:1062px;top:144px;width:9px;height:9px;background:#fffdf4;border:2px solid;border-color:#8a8a8a #fff #fff #8a8a8a;box-shadow:inset 1px 1px 0 #4a4a4a, inset -1px -1px 0 #d4d0c8"></div>
<div class="t" style="left:1081px;top:141.46px;font-size:16px;line-height:19px;font-weight:normal;color:#111;letter-spacing:-0.3px;-webkit-text-stroke:0.22px #dedef5">Missing:</div>
<div style="left:1062px;top:165px;width:9px;height:9px;background:#d4d0c8;border:2px solid;border-color:#8a8a8a #fff #fff #8a8a8a;box-shadow:inset 1px 1px 0 #4a4a4a, inset -1px -1px 0 #d4d0c8"></div>
<div class="t" style="left:1081px;top:161.96px;font-size:16px;line-height:19px;font-weight:normal;color:#a8a8a8;letter-spacing:-0.3px;-webkit-text-stroke:0.22px #dedef5">Loan:</div>
<div style="left:748px;top:354px;width:558px;height:143px;border:1px solid #8c8c96;box-shadow:inset 1px 1px 0 #fff, 1px 1px 0 #fff"></div>
<div style="left:754px;top:346px;width:80px;height:14px;background:#dedef5"></div>
<div class="t" style="left:757px;top:344.96px;font-size:16px;line-height:19px;font-weight:bold;color:#111;">Job Type:</div>
<svg style="position:absolute;left:763px;top:369.5px" width="12" height="12"><circle cx="6" cy="6" r="5.2" fill="#d4d0c8"/><path d="M2.3,9.7 A5.2,5.2 0 0 1 9.7,2.3" stroke="#7c7c7c" stroke-width="1.1" fill="none"/><path d="M3.1,8.9 A4.1,4.1 0 0 1 8.9,3.1" stroke="#3a3a3a" stroke-width="1" fill="none"/><path d="M9.7,2.3 A5.2,5.2 0 0 1 2.3,9.7" stroke="#fff" stroke-width="1.1" fill="none"/></svg>
<div class="t" style="left:781px;top:365.56px;font-size:16px;line-height:19px;font-weight:normal;color:#a8a8a8;letter-spacing:-0.27px;-webkit-text-stroke:0.22px #dedef5">SC - Service Check:</div>
<svg style="position:absolute;left:763px;top:389.5px" width="12" height="12"><circle cx="6" cy="6" r="5.2" fill="#d4d0c8"/><path d="M2.3,9.7 A5.2,5.2 0 0 1 9.7,2.3" stroke="#7c7c7c" stroke-width="1.1" fill="none"/><path d="M3.1,8.9 A4.1,4.1 0 0 1 8.9,3.1" stroke="#3a3a3a" stroke-width="1" fill="none"/><path d="M9.7,2.3 A5.2,5.2 0 0 1 2.3,9.7" stroke="#fff" stroke-width="1.1" fill="none"/></svg>
<div class="t" style="left:781px;top:386.06px;font-size:16px;line-height:19px;font-weight:normal;color:#a8a8a8;letter-spacing:-0.27px;-webkit-text-stroke:0.22px #dedef5">TO - Technical Order:</div>
<svg style="position:absolute;left:763px;top:410.5px" width="12" height="12"><circle cx="6" cy="6" r="5.2" fill="#d4d0c8"/><path d="M2.3,9.7 A5.2,5.2 0 0 1 9.7,2.3" stroke="#7c7c7c" stroke-width="1.1" fill="none"/><path d="M3.1,8.9 A4.1,4.1 0 0 1 8.9,3.1" stroke="#3a3a3a" stroke-width="1" fill="none"/><path d="M9.7,2.3 A5.2,5.2 0 0 1 2.3,9.7" stroke="#fff" stroke-width="1.1" fill="none"/></svg>
<div class="t" style="left:781px;top:406.56px;font-size:16px;line-height:19px;font-weight:normal;color:#a8a8a8;letter-spacing:-0.27px;-webkit-text-stroke:0.22px #dedef5">UMC - Unschedule Maintenance Check:</div>
<svg style="position:absolute;left:763px;top:430.5px" width="12" height="12"><circle cx="6" cy="6" r="5.2" fill="#d4d0c8"/><path d="M2.3,9.7 A5.2,5.2 0 0 1 9.7,2.3" stroke="#7c7c7c" stroke-width="1.1" fill="none"/><path d="M3.1,8.9 A4.1,4.1 0 0 1 8.9,3.1" stroke="#3a3a3a" stroke-width="1" fill="none"/><path d="M9.7,2.3 A5.2,5.2 0 0 1 2.3,9.7" stroke="#fff" stroke-width="1.1" fill="none"/></svg>
<div class="t" style="left:781px;top:427.06px;font-size:16px;line-height:19px;font-weight:normal;color:#a8a8a8;letter-spacing:-0.27px;-webkit-text-stroke:0.22px #dedef5">MRQ - Maintenance Requirement:</div>
<svg style="position:absolute;left:763px;top:451.5px" width="12" height="12"><circle cx="6" cy="6" r="5.2" fill="#fffdf4"/><path d="M2.3,9.7 A5.2,5.2 0 0 1 9.7,2.3" stroke="#7c7c7c" stroke-width="1.1" fill="none"/><path d="M3.1,8.9 A4.1,4.1 0 0 1 8.9,3.1" stroke="#3a3a3a" stroke-width="1" fill="none"/><path d="M9.7,2.3 A5.2,5.2 0 0 1 2.3,9.7" stroke="#fff" stroke-width="1.1" fill="none"/><circle cx="6" cy="6" r="1.9" fill="#000"/></svg>
<div class="t" style="left:781px;top:447.56px;font-size:16px;line-height:19px;font-weight:normal;color:#111;letter-spacing:-0.27px;-webkit-text-stroke:0.22px #dedef5">INS - Inspection Remark:</div>
<svg style="position:absolute;left:763px;top:471.5px" width="12" height="12"><circle cx="6" cy="6" r="5.2" fill="#fffdf4"/><path d="M2.3,9.7 A5.2,5.2 0 0 1 9.7,2.3" stroke="#7c7c7c" stroke-width="1.1" fill="none"/><path d="M3.1,8.9 A4.1,4.1 0 0 1 8.9,3.1" stroke="#3a3a3a" stroke-width="1" fill="none"/><path d="M9.7,2.3 A5.2,5.2 0 0 1 2.3,9.7" stroke="#fff" stroke-width="1.1" fill="none"/></svg>
<div class="t" style="left:781px;top:468.06px;font-size:16px;line-height:19px;font-weight:normal;color:#111;letter-spacing:-0.27px;-webkit-text-stroke:0.22px #dedef5">OTHER - Other Job:</div>
<div class="t" style="left:778px;top:508.96px;font-size:16px;line-height:19px;font-weight:normal;color:#111;letter-spacing:-0.25px;-webkit-text-stroke:0.22px #dee0f5">Due Unit:</div>
<div class="t" style="left:857.5px;top:509.85px;font-size:14px;line-height:17px;font-weight:normal;color:#e0203c;">*</div>
<div class="t" style="left:928px;top:508.96px;font-size:16px;line-height:19px;font-weight:normal;color:#111;letter-spacing:-0.25px;-webkit-text-stroke:0.22px #dee0f5">Due Value:</div>
<div class="t" style="left:1020.0px;top:509.85px;font-size:14px;line-height:17px;font-weight:normal;color:#e0203c;">*</div>
<div class="t" style="left:1111px;top:508.96px;font-size:16px;line-height:19px;font-weight:normal;color:#111;letter-spacing:-0.25px;-webkit-text-stroke:0.22px #dee0f5">MHR:</div>
<div class="t" style="left:1171.0px;top:509.35px;font-size:14px;line-height:17px;font-weight:normal;color:#e0203c;">*</div>
<div class="t" style="left:1231px;top:508.96px;font-size:16px;line-height:19px;font-weight:normal;color:#111;letter-spacing:-0.25px;-webkit-text-stroke:0.22px #dee0f5">Down:</div>
<div class="t" style="left:1293.0px;top:509.35px;font-size:14px;line-height:17px;font-weight:normal;color:#e0203c;">*</div>
<div style="left:1034px;top:502px;width:41px;height:24px;background:#d4d0c8;border:1px solid;border-color:#fff #404040 #404040 #fff;box-shadow:inset -1px -1px 0 #808080"></div>
<svg style="position:absolute;left:1046px;top:505px" width="18" height="17"><rect x="1" y="1" width="16" height="15" fill="#fff" stroke="#101010" stroke-width="1"/><rect x="1" y="1" width="16" height="3.5" fill="#0c1c9c"/><rect x="7" y="2" width="4" height="1" fill="#fff"/><path d="M1.5,7.5 h15 M1.5,10.5 h15 M1.5,13.5 h15 M4.5,4.5 v11 M7.5,4.5 v11 M10.5,4.5 v11 M13.5,4.5 v11" stroke="#4a2020" stroke-width="1"/></svg>
<div style="left:748px;top:530px;width:134px;height:22px;background:#fffdf6;border:2px solid;border-color:#808080 #fff #fff #808080;box-shadow:inset 1px 1px 0 #404040, inset -1px -1px 0 #d4d0c8"></div>
<div style="left:869px;top:532px;width:13px;height:20px;background:#d4d0c8;border:1px solid;border-color:#fff #404040 #404040 #fff;box-shadow:inset -1px -1px 0 #808080"></div>
<div style="left:873px;top:542px;width:0;height:0;border-left:4px solid transparent;border-right:4px solid transparent;border-top:4px solid #000"></div>
<div class="t" style="left:751px;top:532.96px;font-size:16px;line-height:19px;font-weight:bold;color:#1c1cae;">DATE</div>
<div style="left:898px;top:530px;width:163px;height:25px;background:#cccac9;border:1px solid #151515"></div>
<div class="t" style="left:780.0px;top:531.96px;width:400px;text-align:center;font-size:16px;line-height:19px;font-weight:bold;color:#1c1cae;">202404<span class="o" style="--b:#cccac9">1</span>9</div>
<div style="left:1075px;top:530px;width:109px;height:25px;background:#fffdf6;border:1px solid #222"></div>
<div style="left:1198px;top:530px;width:109px;height:25px;background:#fffdf6;border:1px solid #222"></div>
<div style="left:748px;top:581px;width:558px;height:70px;border:1px solid #8c8c96;box-shadow:inset 1px 1px 0 #fff, 1px 1px 0 #fff"></div>
<div style="left:754px;top:572px;width:104px;height:14px;background:#dedef5"></div>
<div class="t" style="left:757px;top:570.96px;font-size:16px;line-height:19px;font-weight:bold;color:#111;">Instructions:</div>
<div style="left:762px;top:606px;width:9px;height:9px;background:#fffdf4;border:2px solid;border-color:#8a8a8a #fff #fff #8a8a8a;box-shadow:inset 1px 1px 0 #4a4a4a, inset -1px -1px 0 #d4d0c8"></div>
<div class="t" style="left:780px;top:603.82px;font-size:13.5px;line-height:16px;font-weight:normal;color:#111;-webkit-text-stroke:0.25px #dedef5">:ETOPS</div>
<div style="left:762px;top:626px;width:9px;height:9px;background:#fffdf4;border:2px solid;border-color:#8a8a8a #fff #fff #8a8a8a;box-shadow:inset 1px 1px 0 #4a4a4a, inset -1px -1px 0 #d4d0c8"></div>
<div class="t" style="left:780px;top:623.82px;font-size:13.5px;line-height:16px;font-weight:normal;color:#111;-webkit-text-stroke:0.25px #dedef5">:TAT CRT</div>
<div style="left:871px;top:606px;width:9px;height:9px;background:#fffdf4;border:2px solid;border-color:#8a8a8a #fff #fff #8a8a8a;box-shadow:inset 1px 1px 0 #4a4a4a, inset -1px -1px 0 #d4d0c8"></div>
<div class="t" style="left:889px;top:603.82px;font-size:13.5px;line-height:16px;font-weight:normal;color:#111;-webkit-text-stroke:0.25px #dedef5">:DI (RII)</div>
<div style="left:871px;top:626px;width:9px;height:9px;background:#fffdf4;border:2px solid;border-color:#8a8a8a #fff #fff #8a8a8a;box-shadow:inset 1px 1px 0 #4a4a4a, inset -1px -1px 0 #d4d0c8"></div>
<div class="t" style="left:889px;top:623.82px;font-size:13.5px;line-height:16px;font-weight:normal;color:#111;-webkit-text-stroke:0.25px #dedef5">:CAT 3</div>
<div style="left:980px;top:606px;width:9px;height:9px;background:#fffdf4;border:2px solid;border-color:#8a8a8a #fff #fff #8a8a8a;box-shadow:inset 1px 1px 0 #4a4a4a, inset -1px -1px 0 #d4d0c8"></div>
<div class="t" style="left:998px;top:603.82px;font-size:13.5px;line-height:16px;font-weight:normal;color:#111;-webkit-text-stroke:0.25px #dedef5">:CRIT</div>
<div style="left:980px;top:626px;width:9px;height:9px;background:#fffdf4;border:2px solid;border-color:#8a8a8a #fff #fff #8a8a8a;box-shadow:inset 1px 1px 0 #4a4a4a, inset -1px -1px 0 #d4d0c8"></div>
<div class="t" style="left:998px;top:623.82px;font-size:13.5px;line-height:16px;font-weight:normal;color:#111;-webkit-text-stroke:0.25px #dedef5">:CDCCL</div>
<div style="left:1089px;top:606px;width:9px;height:9px;background:#fffdf4;border:2px solid;border-color:#8a8a8a #fff #fff #8a8a8a;box-shadow:inset 1px 1px 0 #4a4a4a, inset -1px -1px 0 #d4d0c8"></div>
<div class="t" style="left:1107px;top:603.82px;font-size:13.5px;line-height:16px;font-weight:normal;color:#111;-webkit-text-stroke:0.25px #dedef5">:ALI</div>
<div style="left:1089px;top:626px;width:9px;height:9px;background:#fffdf4;border:2px solid;border-color:#8a8a8a #fff #fff #8a8a8a;box-shadow:inset 1px 1px 0 #4a4a4a, inset -1px -1px 0 #d4d0c8"></div>
<div class="t" style="left:1107px;top:623.82px;font-size:13.5px;line-height:16px;font-weight:normal;color:#111;-webkit-text-stroke:0.25px #dedef5">:EWIS</div>
<div class="t" style="left:639px;top:40.69px;font-size:11px;line-height:13px;font-weight:normal;color:rgba(60,60,90,0.09);letter-spacing:-0.45px;word-spacing:2.5px">Permission: <span id="g1">FULL</span> CONTROL, ID: 12291, WO Close: False, WO: 202403-LM0002, Cust WO: AB-01022020-1, A/C Reg: RA-0000<span id="g2">2</span></div>
<div style="left:700px;top:54px;width:650px;height:1px;background:rgba(60,60,90,0.06)"></div>
<div style="left:736px;top:40px;width:612px;height:1px;background:rgba(60,60,90,0.05)"></div>
<div class="t" style="left:758px;top:79.46px;font-size:16px;line-height:19px;font-weight:bold;color:rgba(60,60,80,0.09);">Selected Task:</div>
<div style="left:750px;top:101px;width:222px;height:24px;border:1px solid rgba(60,60,90,0.035)"></div>
<div class="t" style="left:757px;top:102.96px;font-size:16px;line-height:19px;font-weight:bold;color:rgba(60,60,80,0.08);">Task Card:</div>
<div style="left:750px;top:131px;width:222px;height:25px;border:1px solid rgba(60,60,90,0.035);background:rgba(80,80,160,0.04)"></div>
<div style="left:985px;top:103px;width:1px;height:52px;background:rgba(60,60,90,0.07)"></div>
<div style="left:1050px;top:103px;width:1px;height:52px;background:rgba(60,60,90,0.07)"></div>
<div style="left:1110px;top:103px;width:1px;height:52px;background:rgba(60,60,90,0.07)"></div>
<div style="left:1170px;top:103px;width:1px;height:52px;background:rgba(60,60,90,0.07)"></div>
<div style="left:1230px;top:103px;width:1px;height:52px;background:rgba(60,60,90,0.07)"></div>
<div style="left:1290px;top:103px;width:1px;height:52px;background:rgba(60,60,90,0.07)"></div>
<div style="left:980px;top:102px;width:330px;height:1px;background:rgba(60,60,90,0.06)"></div>
<div style="left:980px;top:156px;width:330px;height:1px;background:rgba(60,60,90,0.06)"></div>
<div class="t" style="left:993px;top:137.69px;font-size:11px;line-height:13px;font-weight:normal;color:rgba(60,60,90,0.12);">Materials</div>
<div class="t" style="left:1068px;top:137.69px;font-size:11px;line-height:13px;font-weight:normal;color:rgba(60,60,90,0.12);">NRC</div>
<div class="t" style="left:1126px;top:137.69px;font-size:11px;line-height:13px;font-weight:normal;color:rgba(60,60,90,0.12);">NCTI</div>
<div class="t" style="left:1179px;top:137.69px;font-size:11px;line-height:13px;font-weight:normal;color:rgba(60,60,90,0.12);">Close</div>
<div class="t" style="left:1229px;top:137.69px;font-size:11px;line-height:13px;font-weight:normal;color:rgba(60,60,90,0.12);">Update</div>
<svg style="position:absolute;left:0;top:0" width="1357" height="722"><circle cx="1018" cy="120" r="9" fill="rgba(60,140,160,0.12)"/><rect x="1005" y="124" width="8" height="6" fill="rgba(60,60,200,0.10)"/><rect x="1064" y="108" width="22" height="22" fill="none" stroke="rgba(60,60,90,0.12)" stroke-width="1.5"/><rect x="1118" y="112" width="24" height="18" fill="rgba(40,60,200,0.12)"/><rect x="1176" y="110" width="10" height="12" fill="rgba(40,60,200,0.09)"/><rect x="1178" y="126" width="20" height="8" fill="none" stroke="rgba(60,60,90,0.12)"/><rect x="1233" y="110" width="22" height="24" fill="none" stroke="rgba(60,60,90,0.08)"/><path d="M1236,122 l6,7 l10,-14" fill="none" stroke="rgba(200,60,80,0.15)" stroke-width="2"/></svg>
<svg style="position:absolute;left:0;top:0" width="1357" height="722"><polygon points="342,556 367,576 291,645" fill="#1e9bf5"/><circle cx="362" cy="557" r="17.5" fill="#1a9bf4" stroke="#3c3c3c" stroke-width="1.6"/><circle cx="362" cy="557" r="16.2" fill="none" stroke="#9fd4fa" stroke-width="0.6"/><text x="362.5" y="562.5" font-family="Liberation Serif" font-weight="bold" font-size="14.5" fill="#fff" text-anchor="middle">14</text></svg>
</body></html>
